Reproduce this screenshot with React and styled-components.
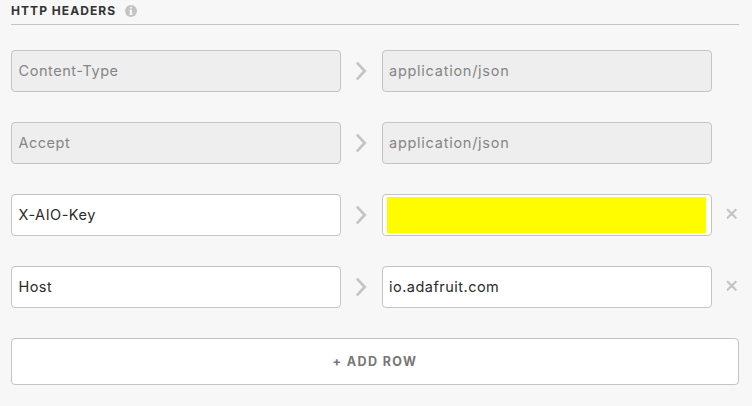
import React from "react";
import styled, { createGlobalStyle } from "styled-components";

const GlobalStyle = createGlobalStyle`
  *, *::before, *::after { box-sizing: border-box; }
  body { margin: 0; background: #f7f7f7; }
`;

const Panel = styled.section`
  width: 752px;
  height: 406px;
  padding: 0 13px 0 11px;
  overflow: hidden;
  background: #f7f7f7;
  color: #333;
  font-family: Inter, "Liberation Sans", sans-serif;
`;

const Header = styled.header`
  display: flex;
  align-items: center;
  gap: 9px;
  height: 25px;
  padding-bottom: 3px;
  border-bottom: 1px solid #c4c4c4;
`;

const Title = styled.h2`
  margin: 0;
  width: 105px;
  font-size: 12px;
  font-weight: 700;
  line-height: 20px;
  letter-spacing: 1.05px;
  white-space: nowrap;
`;

const InfoIcon = styled.svg`
  width: 12px;
  height: 12px;
`;

const Rows = styled.div`
  display: flex;
  flex-direction: column;
  gap: 30px;
  margin: 25px 0 30px;
`;

const Row = styled.div`
  display: grid;
  grid-template-columns: 330px 41px 330px 1fr;
  align-items: center;
  height: 42px;
`;

const Field = styled.div`
  display: flex;
  align-items: center;
  height: 42px;
  padding: ${(p) => (p.$redacted ? "2px 5px 2px 4px" : "0 6px")};
  border: 1px solid #c4c4c4;
  border-radius: 4px;
  background: ${(p) => (p.$disabled ? "#eee" : "#fff")};
  color: ${(p) => (p.$disabled ? "#858585" : "#2b2b2b")};
  font-size: 14.5px;
  font-weight: 400;
  line-height: 20px;
  letter-spacing: ${(p) => p.$tracking || 0}px;
  white-space: nowrap;
`;

const NameField = styled(Field)`
  padding-left: 6.5px;
`;

const Redaction = styled.span`
  flex: 1;
  height: 36px;
  background: #fffc00;
`;

const Chevron = styled.svg`
  width: 12px;
  height: 20px;
  margin-left: 14px;
  fill: none;
  stroke: #c4c4c4;
  stroke-width: 2.7;
  stroke-linecap: round;
`;

const RemoveButton = styled.button`
  width: 12px;
  height: 12px;
  margin: 0 0 2px 14px;
  padding: 0;
  border: 0;
  background: none;

  svg {
    display: block;
    fill: none;
    stroke: #c4c4c4;
    stroke-width: 2.2;
    stroke-linecap: round;
  }
`;

const AddButton = styled.button`
  display: flex;
  align-items: center;
  justify-content: center;
  width: 728px;
  height: 47px;
  padding: 0;
  border: 1px solid #c4c4c4;
  border-radius: 4px;
  background: #fff;
  color: #777;
  font: 700 12.5px/20px Inter, "Liberation Sans", sans-serif;
  letter-spacing: 1.4px;
`;

const headers = [
  { name: "Content-Type", value: "application/json", locked: true, nameTracking: 0.55, valueTracking: 0.74 },
  { name: "Accept", value: "application/json", locked: true, nameTracking: 0.5, valueTracking: 0.74 },
  { name: "X-AIO-Key", redacted: true, nameTracking: 0.52 },
  { name: "Host", value: "io.adafruit.com", nameTracking: 0.45, valueTracking: 0.48 },
];

export default function App() {
  return (
    <>
      <GlobalStyle />
      <Panel>
        <Header>
          <Title>HTTP HEADERS</Title>
          <InfoIcon viewBox="0 0 12 12">
            <circle cx="6" cy="6" r="6" fill="#c4c4c4" />
            <path d="M5 2h2v1.6H5zM4.3 4.7H7v3.7h.8v1.3H4.3V8.4H5V6h-.7z" fill="#f7f7f7" />
          </InfoIcon>
        </Header>
        <Rows>
          {headers.map((h) => (
            <Row key={h.name}>
              <NameField $disabled={h.locked} $tracking={h.nameTracking}>{h.name}</NameField>
              <Chevron viewBox="0 0 12 20">
                <path d="M2.6 2.4L9.7 10L2.6 17.6" />
              </Chevron>
              <Field $disabled={h.locked} $redacted={h.redacted} $tracking={h.valueTracking}>
                {h.redacted ? <Redaction /> : h.value}
              </Field>
              {!h.locked && (
                <RemoveButton aria-label="Remove row">
                  <svg width="12" height="12" viewBox="0 0 12 12">
                    <path d="M1.7 1.8L9.7 9.8M9.7 1.8L1.7 9.8" />
                  </svg>
                </RemoveButton>
              )}
            </Row>
          ))}
        </Rows>
        <AddButton>+ ADD ROW</AddButton>
      </Panel>
    </>
  );
}
